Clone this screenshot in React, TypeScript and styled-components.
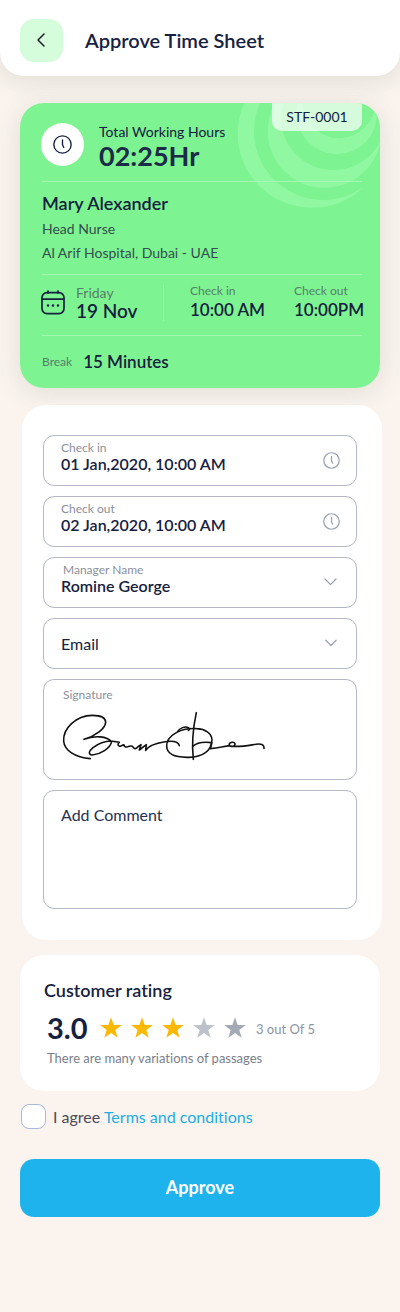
import React from 'react';
import styled, { createGlobalStyle } from 'styled-components';

const navy = '#16213f';
const grey = '#8b8f9c';
const line = '#b4b8c8';

const GlobalStyle = createGlobalStyle`
  *, *::before, *::after { box-sizing: border-box; }
  body {
    margin: 0;
    background: #faf3ee;
    color: ${navy};
    font-family: Lato, "Open Sans", sans-serif;
    font-size: 15px;
    font-variant-ligatures: none;
  }
  button, input, select, textarea { font: inherit; color: inherit; }
`;

const Page = styled.div`
  min-height: 100vh;
  padding-bottom: 95px;
`;

const Header = styled.header`
  display: flex;
  align-items: center;
  gap: 22px;
  height: 76px;
  padding: 5px 20px 0;
  background: #fff;
  border-radius: 0 0 24px 24px;
  box-shadow: 0 4px 24px rgba(90, 110, 80, 0.16);
`;

const BackButton = styled.button`
  display: grid;
  place-items: center;
  width: 43px;
  height: 43px;
  padding: 0 1px 2px 0;
  border: 0;
  border-radius: 14px;
  background: #d5fcdb;
  cursor: pointer;
`;

const Title = styled.h1`
  margin: 0;
  padding-bottom: 2px;
  font-size: 20px;
  line-height: 24px;
  font-weight: 600;
`;

const Main = styled.main`
  padding: 27px 20px 0;
`;

const Summary = styled.section`
  position: relative;
  overflow: hidden;
  padding: 0 18px 0 22px;
  border-radius: 24px;
  background: #7ef392;
`;

const SummaryShadow = styled.div`
  border-radius: 24px;
  box-shadow: 0 4px 26px rgba(90, 110, 80, 0.15);
`;

const Rings = styled.svg`
  position: absolute;
  top: 0;
  right: 0;
`;

const Tag = styled.span`
  position: absolute;
  top: 0;
  right: 18px;
  width: 90px;
  border-radius: 0 0 10px 10px;
  background: rgba(255, 255, 255, 0.68);
  font-size: 14px;
  line-height: 28px;
  text-align: center;
`;

const Block = styled.div`
  position: relative;
  & + & { border-top: 1px solid #a5f8b2; }
`;

const HoursBlock = styled(Block)`
  display: flex;
  gap: 15px;
  height: 78px;
  margin-left: -1px;
  padding-top: 20px;
`;

const ClockBadge = styled.span`
  display: grid;
  place-items: center;
  width: 43px;
  height: 43px;
  border-radius: 50%;
  background: #fff;
`;

const Hours = styled.div`
  font-size: 27px;
  line-height: 30px;
  font-weight: 700;
  color: #1b2b48;
`;

const PersonBlock = styled(Block)`
  height: 93px;
  padding-top: 9px;
`;

const Name = styled.h2`
  margin: 0 0 2px;
  font-size: 18px;
  line-height: 24px;
  font-weight: 600;
`;

const Detail = styled.div<{ $tight?: boolean }>`
  font-size: 14px;
  line-height: ${p => (p.$tight ? '18px' : '24px')};
  color: ${p => (p.$tight ? navy : '#31504d')};
`;

const TimesBlock = styled(Block)`
  display: grid;
  grid-template-columns: 34px 88px 1fr 68px;
  height: 61px;
  padding-top: 8px;
`;

const CalendarCell = styled.span`
  margin-left: -1px;
  padding-top: 7px;
`;

const DateCell = styled.div`
  margin: 2px 0 18px;
  border-right: 1px solid #a5f8b2;
`;

const TimeCell = styled.div<{ $indent?: boolean }>`
  padding-left: ${p => (p.$indent ? '26px' : '0')};
  white-space: nowrap;
`;

const Caption = styled.span<{ $large?: boolean }>`
  display: block;
  font-size: ${p => (p.$large ? '14px' : '12px')};
  line-height: 16px;
  color: #55806a;
`;

const Strong = styled.span<{ $large?: boolean }>`
  display: block;
  font-size: ${p => (p.$large ? '19px' : '17px')};
  line-height: ${p => (p.$large ? '20px' : '22px')};
  font-weight: 600;
`;

const BreakBlock = styled(Block)`
  display: flex;
  align-items: center;
  gap: 11px;
  height: 53px;
`;

const FormCard = styled.section`
  display: grid;
  gap: 10px;
  margin: 17px -2px 0 2px;
  padding: 30px 25px 31px 21px;
  border-radius: 24px;
  background: #fff;
`;

const Field = styled.div`
  display: flex;
  align-items: center;
  height: 51px;
  padding: 0 16px 0 17px;
  border: 1px solid ${line};
  border-radius: 11px;
  &:focus-within { border-color: #1fb3ee; }
`;

const FieldText = styled.div`
  flex: 1;
  display: flex;
  flex-direction: column;
  min-width: 0;
  padding-bottom: 8px;
`;

const Label = styled.label<{ $inset?: boolean }>`
  padding-left: ${p => (p.$inset ? '2px' : '0')};
  font-size: 12px;
  line-height: 15px;
  color: ${grey};
`;

const TextInput = styled.input`
  width: 100%;
  height: 18px;
  padding: 0;
  border: 0;
  outline: 0;
  background: transparent;
  font-size: 16px;
  line-height: 18px;
  font-weight: 600;
`;

const Select = styled.select<{ $plain?: boolean }>`
  appearance: none;
  width: 100%;
  height: ${p => (p.$plain ? '48px' : '18px')};
  padding: 0;
  border: 0;
  outline: 0;
  background: transparent;
  font-size: 16px;
  line-height: 18px;
  font-weight: ${p => (p.$plain ? 400 : 600)};
`;

const SignatureField = styled.div`
  height: 101px;
  padding: 7px 17px;
  border: 1px solid ${line};
  border-radius: 11px;
`;

const SignatureLabel = styled.div`
  padding-left: 2px;
  margin-bottom: 8px;
  font-size: 12px;
  line-height: 16px;
  color: ${grey};
`;

const Comment = styled.textarea`
  display: block;
  width: 100%;
  height: 119px;
  padding: 14px 17px;
  border: 1px solid ${line};
  border-radius: 11px;
  outline: 0;
  resize: none;
  background: transparent;
  font-size: 16px;
  line-height: 20px;
  &::placeholder { color: #26304f; opacity: 1; }
  &:focus { border-color: #1fb3ee; }
`;

const RatingCard = styled.section`
  margin-top: 15px;
  padding: 23px 24px;
  border-radius: 24px;
  background: #fff;
`;

const RatingTitle = styled.h2`
  margin: 0;
  font-size: 18px;
  line-height: 24px;
  font-weight: 600;
`;

const RatingRow = styled.div`
  display: flex;
  align-items: center;
  height: 36px;
  margin-top: 8px;
  padding-left: 3px;
`;

const Score = styled.strong`
  width: 53px;
  font-size: 29px;
  line-height: 36px;
  font-weight: 700;
`;

const Stars = styled.div`
  display: flex;
  gap: 9px;
  margin-right: 10px;
`;

const RatingNote = styled.span`
  padding-top: 2px;
  font-size: 13px;
  line-height: 20px;
  color: #8d93a3;
`;

const RatingText = styled.p`
  margin: 3px 0 1px 3px;
  font-size: 13px;
  line-height: 18px;
  color: #7a7e8a;
`;

const Agree = styled.div`
  display: flex;
  align-items: center;
  gap: 7px;
  margin-top: 13px;
  padding-left: 1px;
  font-size: 16px;
  line-height: 24px;
  color: #4a4d59;
`;

const Checkbox = styled.input`
  appearance: none;
  width: 25px;
  height: 25px;
  margin: 0;
  border: 1px solid #a9b9dc;
  border-radius: 8px;
  background: #fff;
  cursor: pointer;
  &:checked { background: #1fb3ee; }
`;

const Link = styled.a`
  color: #1aaee8;
  text-decoration: none;
`;

const Approve = styled.button`
  width: 100%;
  height: 58px;
  margin-top: 30px;
  padding: 0 0 2px;
  border: 0;
  border-radius: 14px;
  background: #1eb3ed;
  color: #fff;
  font-size: 18px;
  font-weight: 700;
  cursor: pointer;
`;

function Clock({ size, color }: { size: number; color: string }) {
  return (
    <svg width={size} height={size} viewBox="0 0 18 18" fill="none" stroke={color} strokeWidth="1.3" strokeLinecap="round" aria-hidden="true">
      <circle cx="9" cy="9" r="8.2" />
      <path d="M9 4.6V9.2L10.2 11.8" />
    </svg>
  );
}

function Chevron() {
  return (
    <svg width="18" height="18" viewBox="0 0 18 18" fill="none" stroke="#9aa0b2" strokeWidth="1.3" strokeLinecap="round" strokeLinejoin="round" aria-hidden="true">
      <path d="M3 5L8.5 10.6L14 5" />
    </svg>
  );
}

function Star({ color }: { color: string }) {
  return (
    <svg width="22" height="22" viewBox="0 0 22 22" fill={color} aria-hidden="true">
      <path d="M11 .3L13.7 8H21.8L15.3 12.9L17.7 20.8L11 16.1L4.3 20.8L6.7 12.9L.2 8H8.3Z" />
    </svg>
  );
}

function Signature() {
  return (
    <svg width="206" height="50" viewBox="18 18 618 150" fill="none" stroke="#111" strokeWidth="4.8" strokeLinecap="round" strokeLinejoin="round" role="img" aria-label="Signature of the manager">
      <path d="M106 161C60 158 28 136 26 108C24 70 62 32 112 31C138 31 152 38 152 52C150 72 120 94 87 103C120 90 156 94 170 110C166 130 136 148 112 150C98 149 102 138 114 128C132 114 152 108 168 108L193 112C188 116 187 122 194 124C202 124 202 118 207 120C208 126 212 127 218 125C226 122 231 121 234 126C237 133 243 132 248 126L258 119L253 135L274 119L272 136C280 122 300 115 330 110C350 107 370 108 373 122" />
      <path d="M425 71C380 68 334 90 335 124C336 150 364 158 402 157C442 156 470 138 471 104C470 84 450 72 425 71Z" />
      <path d="M368 79C374 70 390 62 400 68C405 71 405 74 400 76" />
      <path d="M424 23C416 60 409 110 415 163" />
      <path d="M413 124C426 112 446 110 470 113C470 120 468 126 465 131C490 130 506 124 522 122C522 110 540 108 540 118C539 126 528 126 522 122C545 128 575 122 602 118C618 115 628 118 627 130" />
    </svg>
  );
}

const starColors = ['#fdb800', '#fdb800', '#fdb800', '#bdc1cb', '#a4a9b6'];

export default function App() {
  return (
    <Page>
      <GlobalStyle />
      <Header>
        <BackButton aria-label="Back">
          <svg width="12" height="16" viewBox="0 0 12 16" fill="none" stroke="#1b1f24" strokeWidth="1.5" strokeLinecap="round" strokeLinejoin="round" aria-hidden="true">
            <path d="M9 2L3 8L9 14" />
          </svg>
        </BackButton>
        <Title>Approve Time Sheet</Title>
      </Header>

      <Main>
        <SummaryShadow>
          <Summary>
            <Rings width="143" height="106" viewBox="237 103 143 106" fill="#91f8a2" aria-hidden="true">
              <path d="M363.3 187.2A74 74 0 0 1 311.700 207.700A74 74 0 0 1 237.700 133.700A74 74 0 0 1 244.400 103H260A69 69 0 0 0 254 131A69 69 0 0 0 323 200A69 69 0 0 0 363.3 187.2Z" />
              <path d="M380.6 141A56.600 56.600 0 0 1 324.300 187.700A56.600 56.600 0 0 1 267.700 131A56.600 56.600 0 0 1 275 103H283.200A52 52 0 0 0 281 118A52 52 0 0 0 333 170A52 52 0 0 0 380.6 141Z" />
              <path d="M377 103V114A40 40 0 0 1 336.700 154A40 40 0 0 1 296.700 114A40 40 0 0 1 298 103H302A38 38 0 0 0 340 138.300A38 38 0 0 0 376 103Z" />
            </Rings>
            <Tag>STF-0001</Tag>
            <HoursBlock>
              <ClockBadge><Clock size={19} color={navy} /></ClockBadge>
              <div>
                <Detail $tight>Total Working Hours</Detail>
                <Hours>02:25Hr</Hours>
              </div>
            </HoursBlock>
            <PersonBlock>
              <Name>Mary Alexander</Name>
              <Detail>Head Nurse</Detail>
              <Detail>Al Arif Hospital, Dubai - UAE</Detail>
            </PersonBlock>
            <TimesBlock>
              <CalendarCell>
                <svg width="24" height="25" viewBox="0 0 24 25" fill="none" stroke={navy} strokeWidth="1.7" strokeLinecap="round" aria-hidden="true">
                  <rect x="1" y="2.6" width="22" height="21" rx="5" />
                  <path d="M1.2 9.2H22.8M7 1V3M17 1V3" />
                  <path d="M7 15.500h.01M12 15.500h.01M17 15.500h.01" strokeWidth="2.6" />
                </svg>
              </CalendarCell>
              <DateCell>
                <Caption $large>Friday</Caption>
                <Strong $large>19 Nov</Strong>
              </DateCell>
              <TimeCell $indent>
                <Caption>Check in</Caption>
                <Strong>10:00 AM</Strong>
              </TimeCell>
              <TimeCell>
                <Caption>Check out</Caption>
                <Strong>10:00PM</Strong>
              </TimeCell>
            </TimesBlock>
            <BreakBlock>
              <Caption>Break</Caption>
              <Strong>15 Minutes</Strong>
            </BreakBlock>
          </Summary>
        </SummaryShadow>

        <FormCard>
          <Field>
            <FieldText>
              <Label htmlFor="check-in">Check in</Label>
              <TextInput id="check-in" defaultValue="01 Jan,2020, 10:00 AM" />
            </FieldText>
            <Clock size={17} color="#9aa0b2" />
          </Field>
          <Field>
            <FieldText>
              <Label htmlFor="check-out">Check out</Label>
              <TextInput id="check-out" defaultValue="02 Jan,2020, 10:00 AM" />
            </FieldText>
            <Clock size={17} color="#9aa0b2" />
          </Field>
          <Field>
            <FieldText>
              <Label htmlFor="manager" $inset>Manager Name</Label>
              <Select id="manager"><option>Romine George</option></Select>
            </FieldText>
            <Chevron />
          </Field>
          <Field>
            <Select $plain aria-label="Email"><option>Email</option></Select>
            <Chevron />
          </Field>
          <SignatureField>
            <SignatureLabel>Signature</SignatureLabel>
            <Signature />
          </SignatureField>
          <Comment aria-label="Add Comment" placeholder="Add Comment" />
        </FormCard>

        <RatingCard>
          <RatingTitle>Customer rating</RatingTitle>
          <RatingRow>
            <Score>3.0</Score>
            <Stars>
              {starColors.map((color, i) => <Star key={i} color={color} />)}
            </Stars>
            <RatingNote>3 out Of 5</RatingNote>
          </RatingRow>
          <RatingText>There are many variations of passages</RatingText>
        </RatingCard>

        <Agree>
          <Checkbox type="checkbox" id="agree" />
          <span><label htmlFor="agree">I agree</label> <Link href="#terms">Terms and conditions</Link></span>
        </Agree>
        <Approve>Approve</Approve>
      </Main>
    </Page>
  );
}
